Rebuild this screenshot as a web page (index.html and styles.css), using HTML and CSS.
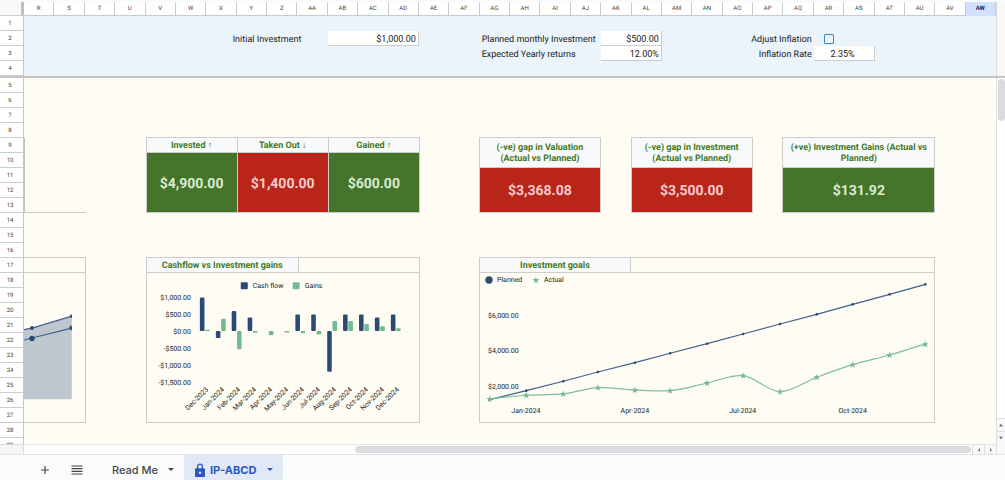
FILE: index.html
```html
<!DOCTYPE html>
<html lang="en">

<head>
  <meta charset="UTF-8">
  <meta name="viewport" content="width=device-width, initial-scale=1.0">
  <title>IP-ABCD</title>
  <link rel="stylesheet" href="styles.css">
</head>

<body>
  <main class="sheet">
    <div class="corner"></div>
    <div class="cols columns">
      <span>R</span><span>S</span><span>T</span><span>U</span><span>V</span><span>W</span><span>X</span><span>Y</span>
      <span>Z</span><span>AA</span><span>AB</span><span>AC</span><span>AD</span><span>AE</span><span>AF</span><span>AG</span>
      <span>AH</span><span>AI</span><span>AJ</span><span>AK</span><span>AL</span><span>AM</span><span>AN</span><span>AO</span>
      <span>AP</span><span>AQ</span><span>AR</span><span>AS</span><span>AT</span><span>AU</span><span>AV</span><span class="selected">AW</span>
    </div>
    <div class="gutter"></div>

    <!-- frozen rows -->
    <div class="rows">
      <span>1</span><span>2</span><span>3</span><span>4</span>
    </div>
    <div class="cols frozen">
      <label class="initial-label" for="initial">Initial Investment</label>
      <input class="initial" id="initial" type="text" value="$1,000.00">
      <label class="monthly-label" for="monthly">Planned monthly Investment</label>
      <input class="monthly" id="monthly" type="text" value="$500.00">
      <label class="returns-label" for="returns">Expected Yearly returns</label>
      <input class="returns" id="returns" type="text" value="12.00%">
      <label class="adjust-label" for="adjust">Adjust Inflation</label>
      <input class="adjust" id="adjust" type="checkbox">
      <label class="rate-label" for="rate">Inflation Rate</label>
      <input class="rate" id="rate" type="text" value="2.35%">
    </div>
    <div class="gutter"></div>
    <div class="freeze-bar"></div>

    <div class="rows">
      <span>5</span><span>6</span><span>7</span><span>8</span><span>9</span><span>10</span><span>11</span><span>12</span><span>13</span>
      <span>14</span><span>15</span><span>16</span><span>17</span><span>18</span><span>19</span><span>20</span><span>21</span><span>22</span>
      <span>23</span><span>24</span><span>25</span><span>26</span><span>27</span><span>28</span><span>29</span>
    </div>
    <div class="cols cells">
      <div class="cut-card"></div>

      <table class="totals">
        <thead>
          <tr>
            <th>Invested ↑</th>
            <th>Taken Out ↓</th>
            <th>Gained ↑</th>
          </tr>
        </thead>
        <tbody>
          <tr>
            <td class="green">$4,900.00</td>
            <td class="red">$1,400.00</td>
            <td class="green">$600.00</td>
          </tr>
        </tbody>
      </table>

      <section class="card valuation">
        <h2>(-ve) gap in Valuation (Actual vs Planned)</h2>
        <p class="red">$3,368.08</p>
      </section>
      <section class="card investment">
        <h2>(-ve) gap in Investment (Actual vs Planned)</h2>
        <p class="red">$3,500.00</p>
      </section>
      <section class="card gains">
        <h2>(+ve) Investment Gains (Actual vs Planned)</h2>
        <p class="green">$131.92</p>
      </section>

      <section class="panel cut-panel">
        <div class="panel-head"></div>
        <svg viewBox="0 0 61 149">
          <path class="area" d="M0 56.500L8 55L48 43V126.500H0Z" />
          <path class="planned" d="M0 56.500L8 55L48 43M0 67L8 65L48 55" />
          <circle class="dot" cx="8" cy="55" r="2" />
          <path class="dot" d="M48 41A2 2 0 0 0 48 45ZM48 52.500A2.500 2.500 0 0 0 48 57.500Z" />
          <circle class="dot" cx="8" cy="65.500" r="2.700" />
        </svg>
      </section>

      <section class="panel cashflow">
        <div class="panel-head">
          <h2>Cashflow vs Investment gains</h2>
        </div>
        <svg viewBox="1 0 273 149">
          <rect class="dot" x="95" y="9" width="7" height="7" rx="1" />
          <text x="107" y="15">Cash flow</text>
          <rect class="gain" x="147" y="9" width="7" height="7" rx="1" />
          <text x="159" y="15">Gains</text>
          <g class="end">
            <text x="45" y="27">$1,000.00</text>
            <text x="45" y="44">$500.00</text>
            <text x="45" y="61">$0.00</text>
            <text x="45" y="78">-$500.00</text>
            <text x="45" y="95">-$1,000.00</text>
            <text x="45" y="112">-$1,500.00</text>
          </g>
          <g class="dot">
            <rect x="54" y="24.300" width="4.600" height="33.700" rx="1" />
            <rect x="70" y="58" width="4.600" height="7" rx="1" />
            <rect x="85.900" y="37.800" width="4.600" height="20.200" rx="1" />
            <rect x="101.900" y="44.500" width="4.600" height="13.500" rx="1" />
            <rect x="149.700" y="41.500" width="4.600" height="16.500" rx="1" />
            <rect x="165.600" y="41.500" width="4.600" height="16.500" rx="1" />
            <rect x="181.600" y="58" width="4.600" height="40.700" rx="1" />
            <rect x="197.500" y="41.500" width="4.600" height="16.500" rx="1" />
            <rect x="213.500" y="41.500" width="4.600" height="16.500" rx="1" />
            <rect x="229.400" y="44.500" width="4.600" height="13.500" rx="1" />
            <rect x="245.400" y="41.500" width="4.600" height="16.500" rx="1" />
          </g>
          <g class="gain">
            <rect x="59.300" y="56.700" width="4.600" height="1.300" />
            <rect x="75.300" y="45.700" width="4.600" height="12.300" rx="1" />
            <rect x="91.200" y="58" width="4.600" height="18.300" rx="1" />
            <rect x="107.200" y="58" width="4.600" height="1.700" />
            <rect x="123.100" y="58" width="4.600" height="4.300" rx="1" />
            <rect x="139.100" y="58" width="4.600" height="1.500" />
            <rect x="155" y="58" width="4.600" height="2.300" rx="1" />
            <rect x="171" y="58" width="4.600" height="3.500" rx="1" />
            <rect x="186.900" y="48" width="4.600" height="10" rx="1" />
            <rect x="202.800" y="48" width="4.600" height="10" rx="1" />
            <rect x="218.800" y="51" width="4.600" height="7" rx="1" />
            <rect x="234.700" y="53.300" width="4.600" height="4.700" rx="1" />
            <rect x="250.700" y="55.300" width="4.600" height="2.700" rx="1" />
          </g>
          <g class="end">
            <text transform="translate(63 117) rotate(-45)">Dec-2023</text>
            <text transform="translate(79 117) rotate(-45)">Jan-2024</text>
            <text transform="translate(95 117) rotate(-45)">Feb-2024</text>
            <text transform="translate(111 117) rotate(-45)">Mar-2024</text>
            <text transform="translate(127 117) rotate(-45)">Apr-2024</text>
            <text transform="translate(143 117) rotate(-45)">May-2024</text>
            <text transform="translate(159 117) rotate(-45)">Jun-2024</text>
            <text transform="translate(175 117) rotate(-45)">Jul-2024</text>
            <text transform="translate(191 117) rotate(-45)">Aug-2024</text>
            <text transform="translate(207 117) rotate(-45)">Sep-2024</text>
            <text transform="translate(223 117) rotate(-45)">Oct-2024</text>
            <text transform="translate(239 117) rotate(-45)">Nov-2024</text>
            <text transform="translate(254 117) rotate(-45)">Dec-2024</text>
          </g>
        </svg>
      </section>

      <section class="panel goals">
        <div class="panel-head">
          <h2>Investment goals</h2>
        </div>
        <svg viewBox="0 0 455 149">
          <defs>
            <marker id="point" markerUnits="userSpaceOnUse" markerWidth="4" markerHeight="4" refX="2" refY="2">
              <circle class="dot" cx="2" cy="2" r="1.300" />
            </marker>
            <marker id="star" markerUnits="userSpaceOnUse" markerWidth="8" markerHeight="8" refX="4" refY="4">
              <path class="gain" d="M4 .6L4.900 3H7.500L5.400 4.600L6.200 7.200L4 5.600L1.800 7.200L2.600 4.600L.5 3H3.100Z" />
            </marker>
          </defs>
          <circle class="dot" cx="9" cy="7" r="3.700" />
          <text x="17" y="9">Planned</text>
          <path class="gain" d="M56 3.600L56.900 6H59.500L57.400 7.600L58.200 10.200L56 8.600L53.800 10.200L54.600 7.600L52.500 6H55.100Z" />
          <text x="64" y="9">Actual</text>
          <text x="8" y="45">$6,000.00</text>
          <text x="8" y="80">$4,000.00</text>
          <text x="8" y="116">$2,000.00</text>
          <g class="middle">
            <text x="46" y="140">Jan-2024</text>
            <text x="155" y="140">Apr-2024</text>
            <text x="263" y="140">Jul-2024</text>
            <text x="373" y="140">Oct-2024</text>
          </g>
          <path class="planned points" d="M9.700 126.700L46.300 117.700L83.300 108.300L118 99L155 89.700L190.300 80.300L227.300 70.700L263.300 61L300.300 51L337 41.300L373 31.300L410 21.300L445.700 11.300" />
          <path class="actual" d="M9.700 126S34.300 123.100 46.300 122.300S71.300 122.300 83.300 121S106 115.400 118 114.700S143 116.500 155 117S178.300 118.500 190.300 117.700S215.300 112.500 227.300 110S251.300 101.300 263.300 102.700S288.300 118.500 300.300 118.700S325 108.800 337 104.300S361 95.400 373 91.700S398 85.400 410 82S434 74.300 445.700 71.200" />
        </svg>
      </section>
    </div>
    <div class="vscroll">
      <div class="vthumb"></div>
      <button type="button" aria-label="Scroll up"><svg viewBox="0 0 4 3"><path d="M0 3L2 0L4 3Z" /></svg></button>
      <button type="button" aria-label="Scroll down"><svg viewBox="0 0 4 3"><path d="M0 0L2 3L4 0Z" /></svg></button>
    </div>

    <div class="hcorner"></div>
    <div class="hscroll">
      <div class="track">
        <div class="hthumb"></div>
      </div>
      <button type="button" aria-label="Scroll left"><svg viewBox="0 0 4 4"><path d="M3 0L1 2L3 4Z" /></svg></button>
      <button type="button" aria-label="Scroll right"><svg viewBox="0 0 4 4"><path d="M1 0L3 2L1 4Z" /></svg></button>
    </div>
    <div class="gutter"></div>
  </main>

  <nav class="tabs">
    <button class="icon" type="button" aria-label="Add sheet">
      <svg viewBox="0 0 12 12"><path d="M6 2V10M2 6H10" /></svg>
    </button>
    <button class="icon" type="button" aria-label="All sheets">
      <svg viewBox="0 0 12 12"><path d="M.5 2H11.500M.5 4.700H11.500M.5 7.300H11.500M.5 10H11.500" /></svg>
    </button>
    <button class="tab" type="button">
      Read Me
      <svg class="caret" viewBox="0 0 6 3"><path d="M0 0H6L3 3Z" /></svg>
    </button>
    <button class="tab active" type="button">
      <svg class="lock" viewBox="0 0 10 14">
        <path class="shackle" d="M2.600 6V3.500A2.400 2.400 0 0 1 7.400 3.500V6" />
        <path fill-rule="evenodd" d="M1 5.300H9Q10 5.300 10 6.300V13Q10 14 9 14H1Q0 14 0 13V6.300Q0 5.300 1 5.300ZM5 8.500A1.200 1.200 0 1 0 5 10.900A1.200 1.200 0 1 0 5 8.500Z" />
      </svg>
      IP-ABCD
      <svg class="caret" viewBox="0 0 6 3"><path d="M0 0H6L3 3Z" /></svg>
    </button>
  </nav>
</body>

</html>
```

FILE: styles.css
```css
* {
  box-sizing: border-box;
  margin: 0;
  padding: 0;
}

body {
  display: flex;
  flex-direction: column;
  height: 100vh;
  overflow: hidden;
  background-color: #f9fbfd;
  font-family: Roboto, "Liberation Sans", sans-serif;
  font-size: 9px;
  text-rendering: geometricPrecision;
  color: #222;
}

button {
  border: 0;
  background: none;
  font: inherit;
}

.sheet {
  flex: 1;
  min-height: 0;
  display: grid;
  grid-template-columns: 24px minmax(0, 1fr) 9px;
  grid-template-rows: 14px 60px 2px minmax(0, 1fr) 10px;
  padding-top: 2px;
}

/* 32 visible columns, R to AW */
.cols {
  display: grid;
  grid-template-columns: repeat(32, minmax(0, 1fr));
}

.corner {
  border-right: 3px solid #bfbfbf;
  border-bottom: 1px solid #ccc;
  background-color: #f8f9fa;
}

.columns {
  background-color: #fff;
  border-bottom: 1px solid #c8cbce;
}

.columns span {
  border-right: 1px solid #ccc;
  text-align: center;
  font-size: 6px;
  line-height: 14px;
  color: #444;
}

.columns .selected {
  background-color: #d3e0fb;
  font-weight: bold;
  color: #0b2a66;
}

.gutter {
  border-left: 1px solid #ddd;
  background-color: #f8f8f8;
}

.rows {
  overflow: hidden;
  border-right: 1px solid #c4c7ca;
  background-color: #fff;
}

.rows span {
  display: block;
  height: 15px;
  padding-right: 3px;
  border-bottom: 1px solid #ccc;
  text-align: center;
  font-size: 6px;
  line-height: 15px;
  color: #444;
}

.frozen {
  grid-template-rows: repeat(4, 15px);
  background-color: #eaf4fa;
  line-height: 18px;
}

.frozen label {
  white-space: nowrap;
}

.frozen input[type="text"] {
  width: 100%;
  height: 15px;
  padding: 2px 2px 0 0;
  border: 0;
  border-right: 1px solid #ccc;
  border-bottom: 1px solid #ccc;
  background-color: #fff;
  font: inherit;
  line-height: 12px;
  text-align: right;
  color: #222;
}

.initial-label {
  grid-area: 2 / 7 / 3 / 11;
  text-align: center;
}

.initial {
  grid-area: 2 / 11 / 3 / 14;
}

.monthly-label {
  grid-area: 2 / 16 / 3 / 20;
  padding-left: 2px;
}

.monthly {
  grid-area: 2 / 20 / 3 / 22;
}

.returns-label {
  grid-area: 3 / 16 / 4 / 20;
  padding-left: 2px;
}

.returns {
  grid-area: 3 / 20 / 4 / 22;
}

.adjust-label {
  grid-area: 2 / 24 / 3 / 27;
  padding-right: 2px;
  text-align: right;
}

.adjust {
  grid-area: 2 / 27 / 3 / 28;
  place-self: center;
  appearance: none;
  width: 10px;
  height: 10px;
  border: 1px solid #3a85c4;
  border-radius: 1px;
}

.rate-label {
  grid-area: 3 / 24 / 4 / 27;
  padding-right: 2px;
  text-align: right;
}

.rate {
  grid-area: 3 / 27 / 4 / 29;
}

.frozen .rate[type="text"] {
  text-align: center;
}

.freeze-bar {
  grid-column: 1 / 4;
  background-color: #c4c4c4;
}

.cells {
  grid-template-rows: repeat(25, 15px);
  overflow: hidden;
  background-color: #fffcf3;
}

h2,
th {
  font-size: 9px;
  font-weight: bold;
  color: #447a26;
}

.green {
  background-color: #45752b;
  color: #d9ead3;
}

.red {
  background-color: #b92619;
  color: #f4cccc;
}

/* cards and panels share the line of the row above */
.totals,
.card,
.panel {
  margin-top: -1px;
}

.card,
.goals {
  margin-left: -1px;
}

.totals,
.cashflow,
.cut-card,
.cut-panel {
  margin-right: -1px;
}

.cut-card {
  grid-area: 5 / 1 / 10 / 3;
  border-left: 1px solid #b9c9ab;
  border-bottom: 1px solid #ccc;
}

.totals {
  grid-area: 5 / 5 / 10 / 14;
  width: calc(100% + 1px);
  height: 76px;
  border-collapse: collapse;
  table-layout: fixed;
}

.totals th,
.totals td {
  border: 1px solid #ccc;
  text-align: center;
}

.totals th {
  height: 15px;
  padding-top: 2px;
  background-color: #f8f9fa;
  line-height: 12px;
}

.totals td {
  height: 60px;
  padding-top: 2px;
  font-size: 14px;
  font-weight: bold;
}

.card {
  border: 1px solid #ccc;
  text-align: center;
}

.card h2 {
  height: 30px;
  padding: 5px 3px 0;
  border-bottom: 1px solid #ccc;
  background-color: #f8f9fa;
  line-height: 11px;
}

.card p {
  height: 44px;
  font-size: 14px;
  font-weight: bold;
  line-height: 46px;
}

.valuation {
  grid-area: 5 / 16 / 10 / 20;
}

.investment {
  grid-area: 5 / 21 / 10 / 25;
}

.gains {
  grid-area: 5 / 26 / 10 / 31;
}

.panel {
  border: 1px solid #ccc;
}

.panel-head {
  height: 15px;
  border-bottom: 1px solid #ccc;
}

.panel h2 {
  height: 14px;
  border-right: 1px solid #ccc;
  background-color: #f8f9fa;
  text-align: center;
  line-height: 16px;
}

.cut-panel {
  grid-area: 13 / 1 / 24 / 3;
  border-left: 0;
}

.cashflow {
  grid-area: 13 / 5 / 24 / 14;
}

.cashflow h2 {
  width: 56%;
}

.goals {
  grid-area: 13 / 16 / 24 / 31;
}

.goals h2 {
  width: calc(100% / 3);
}

.panel svg {
  display: block;
  width: 100%;
  height: 149px;
}

.panel text {
  font-size: 7px;
  fill: #222;
}

.end {
  text-anchor: end;
}

.middle {
  text-anchor: middle;
}

.area {
  fill: #bfc7ce;
}

.dot {
  fill: #2b4b76;
}

.gain {
  fill: #73ba8e;
}

.planned {
  fill: none;
  stroke: #43608c;
  stroke-width: 1.2;
}

.points {
  marker: url(#point);
}

.actual {
  fill: none;
  stroke: #7cc096;
  stroke-width: 1.2;
  marker: url(#star);
}

.vscroll {
  display: flex;
  flex-direction: column;
  border-left: 1px solid #ddd;
  background-color: #fff;
}

.vthumb {
  width: 7px;
  height: 42px;
  margin: 1px 0 auto 1px;
  border-radius: 4px;
  background-color: #dadce0;
}

.vscroll button,
.hscroll button {
  display: flex;
  align-items: center;
  justify-content: center;
  border: 0 solid #ddd;
  background-color: #f8f8f8;
}

.vscroll button {
  height: 13px;
  border-top-width: 1px;
}

.hscroll button {
  width: 12px;
  border-left-width: 1px;
}

.vscroll svg,
.hscroll svg {
  width: 4px;
  height: 4px;
  fill: #777;
}

.hcorner {
  border-top: 1px solid #ddd;
  border-right: 1px solid #ddd;
  background-color: #f5f5f5;
}

.hscroll {
  display: flex;
  border-top: 1px solid #e4e4e4;
  background-color: #fff;
}

.track {
  flex: 1;
  padding: 1px 1px 1px 0;
}

.hthumb {
  width: 65%;
  height: 7px;
  margin-left: auto;
  border-radius: 4px;
  background-color: #dadce0;
}

.tabs {
  display: flex;
  height: 26px;
  padding-left: 29px;
  border-top: 1px solid #e1e3e6;
  font-family: Inter, "Liberation Sans", sans-serif;
  font-size: 11px;
  font-weight: 500;
}

.tabs button {
  display: flex;
  align-items: center;
  padding-top: 4px;
  color: #444746;
}

.icon {
  justify-content: center;
  width: 32px;
}

.icon svg {
  width: 12px;
  height: 12px;
  fill: none;
  stroke: #444746;
  stroke-width: 1.2;
}

.tabs .tab {
  gap: 10px;
  padding-left: 19px;
  padding-right: 10px;
}

.tabs .active {
  gap: 5px;
  padding-left: 11px;
  background-color: #e1e9f7;
  font-weight: 700;
  color: #2a56c6;
}

.tab svg {
  fill: currentColor;
}

.caret {
  width: 6px;
  height: 3px;
}

.active .caret {
  margin-left: 6px;
}

.lock {
  width: 10px;
  height: 14px;
}

.lock .shackle {
  fill: none;
  stroke: currentColor;
  stroke-width: 1.3;
}
```
